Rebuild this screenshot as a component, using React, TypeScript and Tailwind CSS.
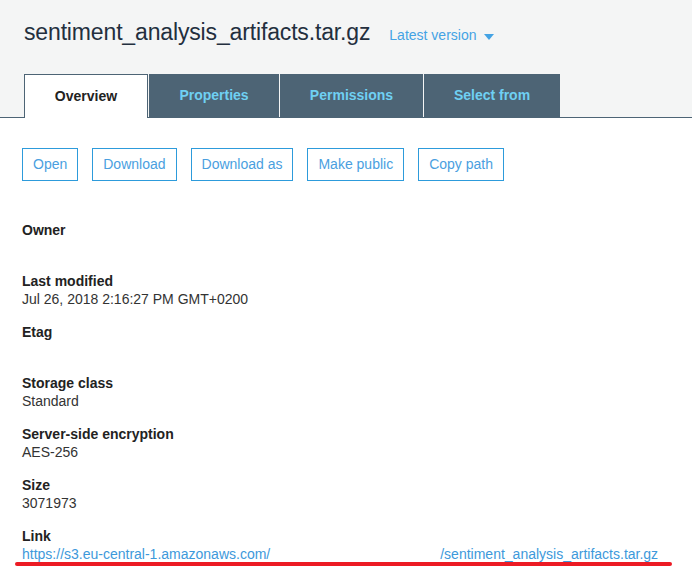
const tabs = [
  { label: 'Properties', w: 'w-[130px]' },
  { label: 'Permissions', w: 'w-[143px]' },
  { label: 'Select from', w: 'w-[136px]' },
];

const actions = ['Open', 'Download', 'Download as', 'Make public', 'Copy path'];

const fields: { label: string; value: string }[] = [
  { label: 'Owner', value: '' },
  { label: 'Last modified', value: 'Jul 26, 2018 2:16:27 PM GMT+0200' },
  { label: 'Etag', value: '' },
  { label: 'Storage class', value: 'Standard' },
  { label: 'Server-side encryption', value: 'AES-256' },
  { label: 'Size', value: '3071973' },
];

export default function App() {
  return (
    <div className="min-h-[582px] bg-white font-['Liberation_Sans',Arial,sans-serif] text-[#222]">
      {/* header */}
      <div className="bg-[#f4f5f5] border-b border-[#4d6475] px-6 pt-[17px]">
        <div className="flex items-baseline gap-[19px]">
          <h1 className="text-[23px] leading-[30px] text-[#232f3e] tracking-[-0.15px]">
            sentiment_analysis_artifacts.tar.gz
          </h1>
          <button className="flex items-center gap-[8px] text-[14px] text-[#44a3e4]">
            Latest version
            <svg width="10" height="6" viewBox="0 0 10 6" className="mt-[2px]">
              <path d="M0 0h10L5 6z" fill="#44a3e4" />
            </svg>
          </button>
        </div>
        <div className="flex gap-px mt-[27px] -mb-px">
          <div className="w-[124px] h-[44px] bg-white border border-b-0 border-[#4d6475] flex items-center justify-center text-[14px] font-bold text-[#222]">
            Overview
          </div>
          {tabs.map((t) => (
            <div
              key={t.label}
              className={`${t.w} h-[43px] bg-[#4d6475] flex items-center justify-center text-[14px] font-bold text-[#6fd0f3]`}
            >
              {t.label}
            </div>
          ))}
        </div>
      </div>

      {/* body */}
      <div className="px-[22px] pt-[30px]">
        <div className="flex gap-[14px]">
          {actions.map((a) => (
            <button
              key={a}
              className="h-[33px] px-[10px] border border-[#2d9bdb] text-[14px] text-[#4a9fdf] bg-white"
            >
              {a}
            </button>
          ))}
        </div>

        <div className="mt-[40px] flex flex-col gap-[15px]">
          {fields.map((f) => (
            <div key={f.label} className="text-[14px] leading-[18px]">
              <div className="font-bold">{f.label}</div>
              <div className="h-[18px] text-[#333]">{f.value}</div>
            </div>
          ))}
          <div className="text-[14px] leading-[18px]">
            <div className="font-bold">Link</div>
            <div className="text-[#3d99db] whitespace-nowrap">
              <span>https://s3.eu-central-1.amazonaws.com/</span>
              <span className="inline-block w-[170px]" />
              <span>/sentiment_analysis_artifacts.tar.gz</span>
            </div>
            <div className="-ml-[7px] mt-[-1px] h-[4px] w-[657px] rounded-full bg-[#ec1b24]" />
          </div>
        </div>
      </div>
    </div>
  );
}
